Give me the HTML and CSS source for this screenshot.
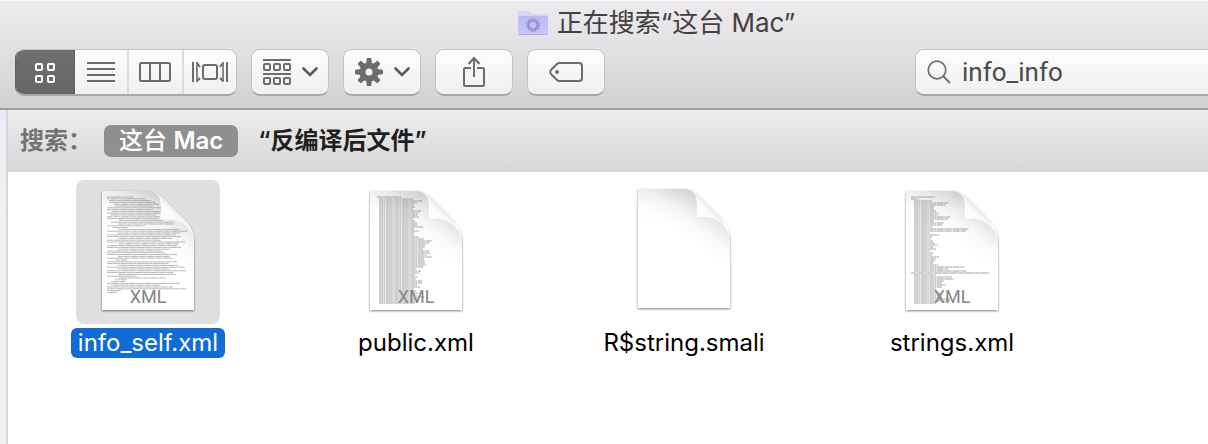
FILE: index.html
```html
<!DOCTYPE html>
<html lang="zh-CN">
<head>
<meta charset="utf-8">
<meta name="viewport" content="width=device-width, initial-scale=1">
<title>正在搜索“这台 Mac”</title>
<link rel="stylesheet" href="styles.css">
</head>
<body>
<div class="window">
  <header class="chrome">
    <div class="titlebar">
      <svg class="folder" width="32" height="26" viewBox="0 0 32 26" aria-hidden="true">
        <defs><linearGradient id="folder-fill" x1="0" y1="0" x2="0" y2="1"><stop offset="0" stop-color="#bcb8f3"/><stop offset="1" stop-color="#c8c4fb"/></linearGradient></defs>
        <path d="M1 24V2Q1 1 2 1H9Q10 1 11 2L13 4H30Q31 4 31 5V24Q31 25 30 25H2Q1 25 1 24Z" fill="#b2aee5"/>
        <path d="M1 23V2Q1 1 2 1H9Q10 1 11 2L13 4H30Q31 4 31 5V23Q31 24 30 24H2Q1 24 1 23Z" fill="#d5d2fb"/>
        <path d="M1 6H31V23Q31 24 30 24H2Q1 24 1 23Z" fill="url(#folder-fill)"/>
        <circle cx="16" cy="15" r="6.4" fill="none" stroke="#958fd8" stroke-width="1.4" stroke-dasharray="1.8 1.551"/>
        <circle cx="16" cy="15" r="4.6" fill="none" stroke="#958fd8" stroke-width="2.4"/>
      </svg>
      <h1 class="title">正在搜索“这台 Mac”</h1>
    </div>
    <div class="toolbar">
      <div class="segments" role="group" aria-label="显示">
        <button class="segment segment-on" type="button" aria-label="图标" aria-pressed="true">
          <svg width="22" height="22" viewBox="0 0 22 22"><g fill="none" stroke="#fff" stroke-width="2"><rect x="2" y="2" width="6" height="6" rx="1"/><rect x="14" y="2" width="6" height="6" rx="1"/><rect x="2" y="14" width="6" height="6" rx="1"/><rect x="14" y="14" width="6" height="6" rx="1"/></g></svg>
        </button>
        <button class="segment" type="button" aria-label="列表" aria-pressed="false">
          <svg width="28" height="22" viewBox="0 0 28 22"><path d="M0 2H28M0 8H28M0 14H28M0 20H28" stroke="#6c6c6c" stroke-width="2"/></svg>
        </button>
        <button class="segment" type="button" aria-label="分栏" aria-pressed="false">
          <svg width="32" height="22" viewBox="0 0 32 22"><path d="M11 2V20M21 2V20" stroke="#6c6c6c" stroke-width="2"/><rect x="1" y="2" width="30" height="18" rx="1.5" fill="none" stroke="#6c6c6c" stroke-width="2"/></svg>
        </button>
        <button class="segment" type="button" aria-label="Cover Flow" aria-pressed="false">
          <svg width="36" height="22" viewBox="0 0 36 22"><g fill="none" stroke="#6c6c6c"><path d="M1 1V21M35 1V21" stroke-width="2"/><path d="M5 1V21M31 1V21" stroke-width="1.6"/><path d="M5 2L8 6M5 20L8 17M31 2L28 6M31 20L28 17" stroke-width="2"/><rect x="11" y="4" width="14" height="14" rx="2" stroke-width="2"/></g></svg>
        </button>
      </div>
      <button class="tool" type="button" aria-label="排列" aria-haspopup="menu">
        <svg width="28" height="26" viewBox="0 0 28 26"><g fill="none" stroke="#6c6c6c" stroke-width="2"><path d="M0 1H28M0 15H28"/><rect x="1" y="5" width="6" height="6" rx="1"/><rect x="11" y="5" width="6" height="6" rx="1"/><rect x="21" y="5" width="6" height="6" rx="1"/><rect x="1" y="19" width="6" height="6" rx="1"/><rect x="11" y="19" width="6" height="6" rx="1"/><rect x="21" y="19" width="6" height="6" rx="1"/></g></svg>
        <svg width="16" height="10" viewBox="0 0 16 10"><path d="M1.500 1.500L8 8L14.500 1.500" fill="none" stroke="#5a5a5a" stroke-width="2.600" stroke-linecap="round"/></svg>
      </button>
      <button class="tool" type="button" aria-label="操作" aria-haspopup="menu">
        <svg width="28" height="28" viewBox="-14 -14 28 28"><g fill="#6c6c6c"><path id="tooth" d="M-2.900 -8L-2.300 -13.400Q-2.200 -14 -1.600 -14H1.600Q2.200 -14 2.300 -13.400L2.900 -8Z"/><use href="#tooth" transform="rotate(45)"/><use href="#tooth" transform="rotate(90)"/><use href="#tooth" transform="rotate(135)"/><use href="#tooth" transform="rotate(180)"/><use href="#tooth" transform="rotate(225)"/><use href="#tooth" transform="rotate(270)"/><use href="#tooth" transform="rotate(315)"/></g><circle r="6.500" fill="none" stroke="#6c6c6c" stroke-width="6"/></svg>
        <svg width="16" height="10" viewBox="0 0 16 10"><path d="M1.500 1.500L8 8L14.500 1.500" fill="none" stroke="#5a5a5a" stroke-width="2.600" stroke-linecap="round"/></svg>
      </button>
      <button class="tool" type="button" aria-label="共享">
        <svg width="22" height="32" viewBox="0 0 22 32"><g fill="none" stroke="#6c6c6c" stroke-width="2"><path d="M8 12H2Q1 12 1 13V29Q1 30 2 30H20Q21 30 21 29V13Q21 12 20 12H14"/><path d="M11 21V2M5.500 8L11 2L16.500 8"/></g></svg>
      </button>
      <button class="tool" type="button" aria-label="标记">
        <svg width="34" height="20" viewBox="0 0 34 20"><path d="M10 1H30Q33 1 33 4V16Q33 19 30 19H10Q9 19 8 18L2 12Q0.500 10 2 8L8 2Q9 1 10 1Z" fill="none" stroke="#6c6c6c" stroke-width="2"/><circle cx="8" cy="10" r="2" fill="#6c6c6c"/></svg>
      </button>
      <label class="search">
        <svg width="24" height="24" viewBox="0 0 24 24" aria-hidden="true"><circle cx="10" cy="10" r="8.800" fill="none" stroke="#707070" stroke-width="1.700"/><path d="M16 16L23 23" stroke="#707070" stroke-width="2"/></svg>
        <input class="search-input" type="text" value="info_info" aria-label="搜索">
      </label>
    </div>
  </header>
  <div class="body">
    <div class="sidebar-edge"></div>
    <main class="main">
      <div class="scope">
        <span class="scope-label">搜索：</span>
        <button class="scope-button scope-on" type="button">这台 <b class="scope-latin">Mac</b></button>
        <button class="scope-button" type="button">“反编译后文件”</button>
      </div>
      <div class="files">
        <button class="file file-on" type="button">
          <span class="thumb"><svg class="page" data-doc="self" width="128" height="128" viewBox="0 0 128 128"></svg></span>
          <span class="name">info_self.xml</span>
        </button>
        <button class="file" type="button">
          <span class="thumb"><svg class="page" data-doc="public" width="128" height="128" viewBox="0 0 128 128"></svg></span>
          <span class="name">public.xml</span>
        </button>
        <button class="file" type="button">
          <span class="thumb"><svg class="page" data-doc="blank" width="128" height="128" viewBox="0 2 128 128"></svg></span>
          <span class="name">R$string.smali</span>
        </button>
        <button class="file" type="button">
          <span class="thumb"><svg class="page" data-doc="strings" width="128" height="128" viewBox="0 0 128 128"></svg></span>
          <span class="name">strings.xml</span>
        </button>
      </div>
    </main>
  </div>
</div>
<svg width="0" height="0" class="defs" aria-hidden="true">
  <defs>
    <linearGradient id="sheet" x1="0" y1="0" x2="0" y2="1"><stop offset="0" stop-color="#f3f3f3"/><stop offset="0.150" stop-color="#fdfdfd"/><stop offset="0.300" stop-color="#fff"/></linearGradient>
    <linearGradient id="shade" gradientUnits="userSpaceOnUse" x1="94" y1="18" x2="68" y2="54"><stop offset="0" stop-color="#000" stop-opacity="0.160"/><stop offset="0.300" stop-color="#000" stop-opacity="0.090"/><stop offset="0.600" stop-color="#000" stop-opacity="0.030"/><stop offset="1" stop-color="#000" stop-opacity="0"/></linearGradient>
    <linearGradient id="curl" gradientUnits="userSpaceOnUse" x1="77" y1="31" x2="90" y2="18"><stop offset="0" stop-color="#fff"/><stop offset="0.650" stop-color="#fafafa"/><stop offset="1" stop-color="#e4e4e4"/></linearGradient>
    <filter id="drop" x="-10%" y="-10%" width="120%" height="120%"><feDropShadow dx="0" dy="1" stdDeviation="1.200" flood-color="#000" flood-opacity="0.500"/></filter>
  </defs>
</svg>
<script src="pages.js"></script>
</body>
</html>
```

FILE: styles.css
```css
* { box-sizing: border-box; }
body {
  margin: 0;
  font-family: Inter, "Noto Sans CJK SC", sans-serif;
  background: #fff;
}
button { font: inherit; border: 0; background: none; padding: 0; margin: 0; }
svg { display: block; flex: none; }
.defs { position: absolute; }
.window { display: flex; flex-direction: column; min-height: 100vh; overflow: hidden; }
.chrome {
  background: linear-gradient(#edebee, #e6e4e7 30%, #d3d1d4);
  border-top: 1px solid #f6f5f7;
  border-bottom: 2px solid #a09ea2;
  padding-bottom: 12px;
}
.titlebar {
  display: flex;
  justify-content: center;
  align-items: center;
  gap: 8px;
  height: 44px;
  padding-left: 104px;
}
.title {
  margin: 0;
  font: 400 26px/40px Inter, "Noto Sans CJK SC", sans-serif;
  color: #434144;
  white-space: nowrap;
}
.toolbar { display: flex; gap: 14px; padding-left: 15px; margin-top: 4px; }
.segments, .tool, .search {
  height: 47px;
  border: 1px solid #c3c1c4;
  border-bottom: 2px solid #aaa8ab;
  border-radius: 9px;
  background: linear-gradient(#fdfdfd, #f0f0f0);
}
.segments { display: flex; width: 222px; overflow: hidden; }
.segment {
  flex: 1;
  display: flex;
  align-items: center;
  justify-content: center;
  border-left: 2px solid #dcdcdc;
}
.segment-on {
  flex: 0 0 60px;
  margin: -1px 0 -2px -1px;
  background: linear-gradient(#6f6f6f, #666);
  border: 1px solid #606060;
}
.segments:has(.segment-on:first-child) { border-left-color: #606060; }
.segment-on + .segment { border-left: 0; }
.tool { display: flex; align-items: center; justify-content: center; gap: 11px; width: 78px; }
.search {
  display: flex;
  align-items: center;
  gap: 11px;
  flex: 0 0 293px;
  min-width: 0;
  margin-left: auto;
  padding-left: 11px;
  border-right: 0;
  border-radius: 9px 0 0 9px;
}
.search-input {
  flex: 1;
  min-width: 0;
  padding: 0;
  border: 0;
  outline: 0;
  background: none;
  font: 400 26px/32px Roboto, sans-serif;
  color: #4a4a4a;
}
.body { display: flex; flex: 1; }
.sidebar-edge {
  flex: 0 0 8px;
  background: linear-gradient(#ebecf3, #eef3f4 30%, #f0f1f3);
  border-right: 2px solid #d6d6d9;
}
.main { flex: 1; min-width: 0; background: #fff; }
.scope {
  display: flex;
  align-items: center;
  height: 62px;
  padding-left: 12px;
  background: linear-gradient(#ececec, #d7d7d7);
  font: 600 24px/32px Inter, "Noto Sans CJK SC", sans-serif;
  white-space: nowrap;
}
.scope-label { width: 84px; color: #737373; }
.scope-button { color: #1f1f1f; margin-left: 20px; }
.scope-on {
  margin-left: 0;
  padding: 0 15px;
  height: 32px;
  border-radius: 7px;
  background: #8f8f8f;
  color: #fff;
  font-weight: 500;
}
.scope-latin { font-weight: 600; }
.files { display: flex; flex-wrap: wrap; gap: 20px 68px; padding: 8px 0 24px 40px; }
.file { display: flex; flex-direction: column; align-items: center; gap: 4px; width: 200px; }
.thumb { padding: 8px; border-radius: 8px; }
.name {
  padding: 0 7px;
  border-radius: 6px;
  font-size: 24px;
  line-height: 30px;
  color: #000;
  white-space: nowrap;
}
.file-on .thumb { background: #dfdfdf; }
.file-on .name { background: #116cd6; color: #fff; }
.page-kind { font-family: Roboto, sans-serif; font-size: 18px; fill: #858585; }
```

FILE: pages.js
```js
// Each row of a page preview is [indent, length], in page units.
const repeat = (n, fn) => Array.from({ length: n }, (_, i) => fn(i));
const wave = (i, a, b) => Math.round(Math.abs(Math.sin(i * a) + Math.sin(i * b)) * 5);

const rows = {
  self: [[0, 26], [0, 38], [2, 42], [2, 46], [6, 46], [8, 38], [0, 54], [0, 46], [4, 50], [0, 53], [3, 46], [0, 53],
    [0, 52], [12, 44], [4, 62], [11, 56], [0, 38], [6, 15], [11, 62], [0, 80], [11, 62], [0, 69], [0, 74], [11, 54],
    [0, 54], [0, 78], [12, 60], [0, 70], [0, 74], [11, 52], [0, 56], [0, 58], [0, 70], [11, 52], [0, 66], [8, 12],
    [0, 70], [0, 62], [11, 60], [0, 78], [11, 52], [0, 79], [0, 66], [11, 58], [0, 30], [11, 48], [8, 12], [4, 14],
    [0, 73], [4, 50], [0, 66], [0, 79], [0, 14], [0, 10]],
  public: [[-2, 24], ...repeat(53, i => [0, (i < 20 ? 34 : i < 34 ? 44 : 35) + wave(i, 1.7, 0.8)])],
  strings: [[-2, 24], [-2, 8], ...repeat(14, i => [1, 18 + wave(i, 1.3, 0.6) * 2]), [1, 55], [1, 52],
    ...repeat(16, i => [1, 16 + wave(i, 1.9, 0.9)]), [1, 24], [1, 50], [1, 34], [1, 52], [-2, 78], ...repeat(15, i => [1, 22 + wave(i, 1.1, 0.7) * 2])]
};

document.querySelectorAll(".page").forEach(svg => {
  const kind = svg.dataset.doc;
  const left = { self: 23, public: 27, strings: 25 }[kind];
  const lines = (rows[kind] || []).map(([indent, length], i) => {
    const y = 9 + i * (kind === "self" ? 1.8 : 2);
    const offset = kind === "self" ? i * 3.7 : 0;
    return `<path d="M${left + indent} ${y}h${length}" stroke-dashoffset="${offset}"/>`;
  }).join("");
  svg.innerHTML = `
    <path d="M18 3H64C72 3 76 7 80 11L98 29C106 37 110 43 110 55V122H18Z" fill="url(#sheet)" filter="url(#drop)"/>
    <clipPath id="clip-${kind}"><path d="M18 3H64C72 3 77 8 77 18V31C88 29 98 32 105 41Q110 47 110 55V122H18Z"/></clipPath>
    <g clip-path="url(#clip-${kind})">
      <path d="M18 3H110V122H18Z" fill="url(#shade)"/>
      <g stroke="#666" stroke-width="1" stroke-opacity="${kind === "self" ? ".48" : ".6"}" stroke-dasharray="4 .3 2 .5 7 .4 1.500 .3">${lines}</g>
    </g>
    <path d="M64 3C72 3 77 8 77 18V31C88 29 98 32 105 41Q103 34 98 29L80 11Q73 3 64 3Z" fill="url(#curl)"/>
    ${kind === "blank" ? "" : '<text class="page-kind" x="64" y="115" text-anchor="middle">XML</text>'}`;
});
```
